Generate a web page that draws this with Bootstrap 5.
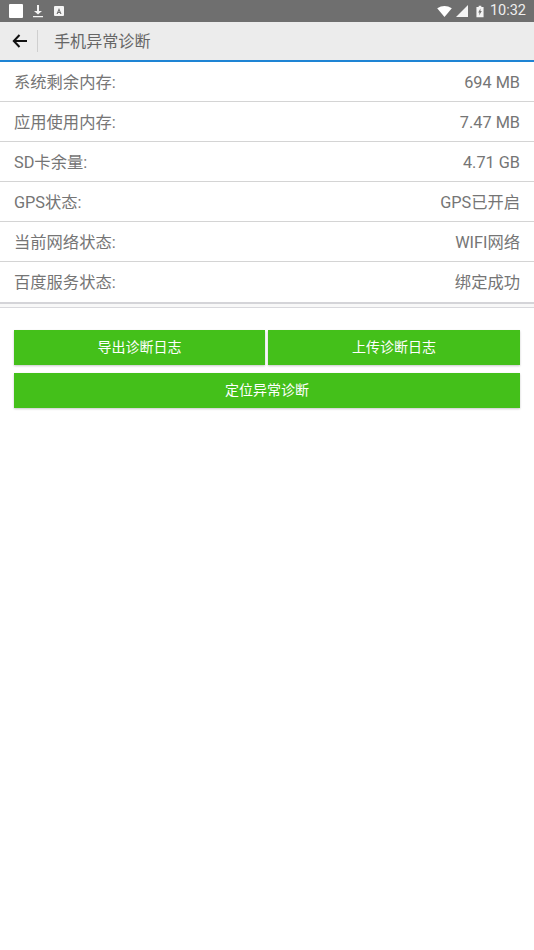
<!DOCTYPE html>
<html lang="zh"><head><meta charset="utf-8">
<link href="https://cdn.jsdelivr.net/npm/bootstrap@5.3.0/dist/css/bootstrap.min.css" rel="stylesheet">
<style>
html,body{height:100%}
body{font-family:Roboto,"Noto Sans CJK SC",sans-serif;color:#757575;background:#fff;width:534px;overflow:hidden}
.sbar{height:22px;background:#6f6f6f;color:#fff;padding:0 8px 0 9px}
.sbar .clock{font-size:14.5px;line-height:22px;margin-left:6px;color:#eee}
.tbar{height:40px;background:#ececec;border-bottom:2px solid #1e84d4}
.backbox{width:38px;height:22px;border-right:1px solid #cfcfcf;padding-left:12px}
.ttl{font-size:16.1px;margin-left:16px;color:#666;line-height:1;padding-top:3px}
.inforow{height:40px;border-bottom:1px solid #d4d4d4;font-size:16.3px;padding:3px 14px 0;color:#757575}
.lastrule{height:6px;border-top:2px solid #d4d4d8;border-bottom:1px solid #d8d8dc;background:#f8f8f8}
.btnzone{padding:22px 14px 0;gap:8px}
.gbtn{background:#44c01a;color:#fff;font-size:14px;height:35px;border:0;border-radius:0;box-shadow:0 1px 2px rgba(0,0,0,.22);padding:0 0 1px}
.gbtn:hover{background:#44c01a;color:#fff}
.btnpair{gap:3px}
.gleft{width:251px}
.icdl{margin-left:1px}
.icapp{margin-left:10px}
</style></head><body>
<div class="sbar d-flex align-items-center">
 <svg width="14" height="14" viewBox="0 0 14 14" class="me-2"><rect width="14" height="14" rx="1" fill="#fff"/></svg>
 <svg width="12" height="14" viewBox="0 0 12 14" class="icdl"><path d="M5 1h2v6h3L6 10.500 2 7h3zM1 12h10v1.300H1z" fill="#f4f4f4"/></svg>
 <svg width="10" height="10" viewBox="0 0 10 10" class="icapp"><rect width="10" height="10" rx="1" fill="#f4f4f4"/><path d="M5 2 7.500 8H6.300L5.900 7H4.100L3.700 8H2.500zM4.500 6h1L5 4.500z" fill="#6f6f6f"/></svg>
 <div class="ms-auto d-flex align-items-center">
  <svg width="15" height="11" viewBox="0 0 16 12" class="me-1"><path d="M0 2.500Q8-2.500 16 2.500L8 12z" fill="#fff"/></svg>
  <svg width="12" height="12" viewBox="0 0 12 12"><path d="M12 0v12H0z" fill="#f4f4f4"/></svg>
  <svg width="8" height="13" viewBox="0 0 9 13" class="ms-2"><path d="M3 0h3v1.500h2.500V13H.5V1.500H3z" fill="#f4f4f4"/><path d="M5 3 2.500 7.500H4L3.500 11 6.500 6H5z" fill="#6f6f6f"/></svg>
  <span class="clock">10:32</span>
 </div>
</div>
<div class="tbar d-flex align-items-center">
 <div class="backbox d-flex align-items-center"><svg width="16" height="14" viewBox="0 0 16 14"><path d="M15 7H2M7.500 1 1.800 7l5.700 6" fill="none" stroke="#111" stroke-width="2"/></svg></div>
 <div class="ttl">手机异常诊断</div>
</div>
<div>
 <div class="inforow d-flex justify-content-between align-items-center"><span>系统剩余内存:</span><span>694 MB</span></div>
 <div class="inforow d-flex justify-content-between align-items-center"><span>应用使用内存:</span><span>7.47 MB</span></div>
 <div class="inforow d-flex justify-content-between align-items-center"><span>SD卡余量:</span><span>4.71 GB</span></div>
 <div class="inforow d-flex justify-content-between align-items-center"><span>GPS状态:</span><span>GPS已开启</span></div>
 <div class="inforow d-flex justify-content-between align-items-center"><span>当前网络状态:</span><span>WIFI网络</span></div>
 <div class="inforow d-flex justify-content-between align-items-center border-0"><span>百度服务状态:</span><span>绑定成功</span></div>
</div>
<div class="lastrule"></div>
<div class="btnzone d-flex flex-column">
 <div class="btnpair d-flex"><button class="btn gbtn gleft flex-shrink-0">导出诊断日志</button><button class="btn gbtn flex-fill">上传诊断日志</button></div>
 <button class="btn gbtn w-100">定位异常诊断</button>
</div>
<script src="https://cdn.jsdelivr.net/npm/bootstrap@5.3.0/dist/js/bootstrap.bundle.min.js"></script>
</body></html>
